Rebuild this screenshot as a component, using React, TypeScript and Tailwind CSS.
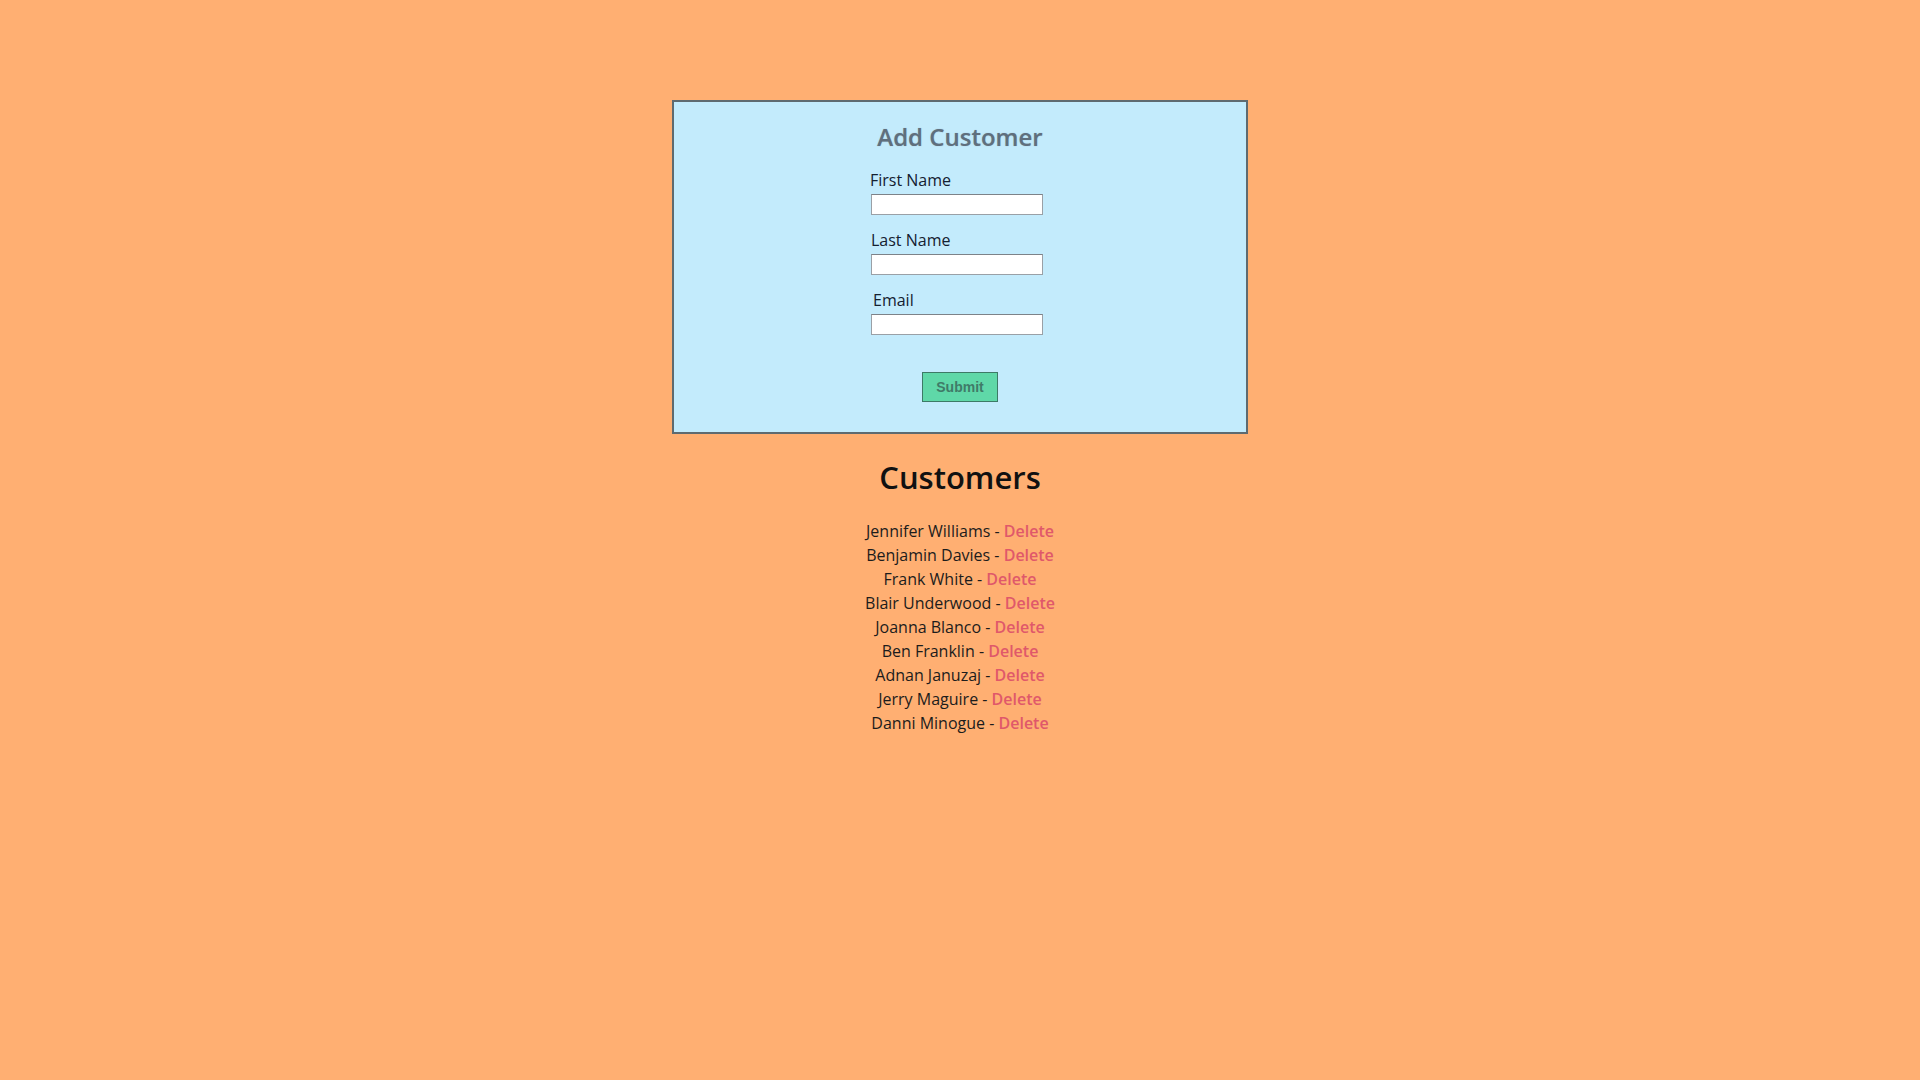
import React from 'react';

const customers = [
  'Jennifer Williams',
  'Benjamin Davies',
  'Frank White',
  'Blair Underwood',
  'Joanna Blanco',
  'Ben Franklin',
  'Adnan Januzaj',
  'Jerry Maguire',
  'Danni Minogue',
];

const App: React.FC = () => {
  return (
    <div className="min-h-screen bg-[#ffaf72] font-['Open_Sans',sans-serif] pt-[100px]">
      <div className="mx-auto flex h-[334px] w-[576px] flex-col items-center border-2 border-[#5e6a70] bg-[#c3ebfc] pt-[17px]">
        <h2 className="text-[24px] font-semibold leading-[36px] text-[#5f6f7d] [text-shadow:0_0_1px_rgba(60,80,100,0.4)]">
          Add Customer
        </h2>
        <form className="mt-[14px] flex w-[178px] flex-col" onSubmit={(e) => e.preventDefault()}>
          <label className="-ml-px text-[16px] leading-[22px] text-[#142030]">First Name</label>
          <input className="mt-[3px] h-[21px] w-[172px] border border-[#9aa0a6] border-t-[#7d8288] bg-white" />
          <label className="mt-[14px] text-[16px] leading-[22px] text-[#142030]">Last Name</label>
          <input className="mt-[3px] h-[21px] w-[172px] border border-[#9aa0a6] border-t-[#7d8288] bg-white" />
          <label className="mt-[14px] ml-[2px] text-[16px] leading-[22px] text-[#142030]">Email</label>
          <input className="mt-[3px] h-[21px] w-[172px] border border-[#9aa0a6] border-t-[#7d8288] bg-white" />
        </form>
        <button className="mt-[37px] h-[30px] w-[76px] border border-[#3d7a66] bg-[#5fd8a8] font-['Liberation_Sans',sans-serif] text-[14px] font-bold text-[#3f7b68]">
          Submit
        </button>
      </div>
      <h1 className="mt-[21px] text-center text-[31px] font-semibold leading-[44px] text-[#111111]">
        Customers
      </h1>
      <ul className="mt-[20px] flex flex-col items-center">
        {customers.map((name) => (
          <li key={name} className="text-[16px] leading-[24px] text-[#1c1c1c]">
            {name} - <span className="font-semibold text-[#e0586a]">Delete</span>
          </li>
        ))}
      </ul>
    </div>
  );
};

export default App;
